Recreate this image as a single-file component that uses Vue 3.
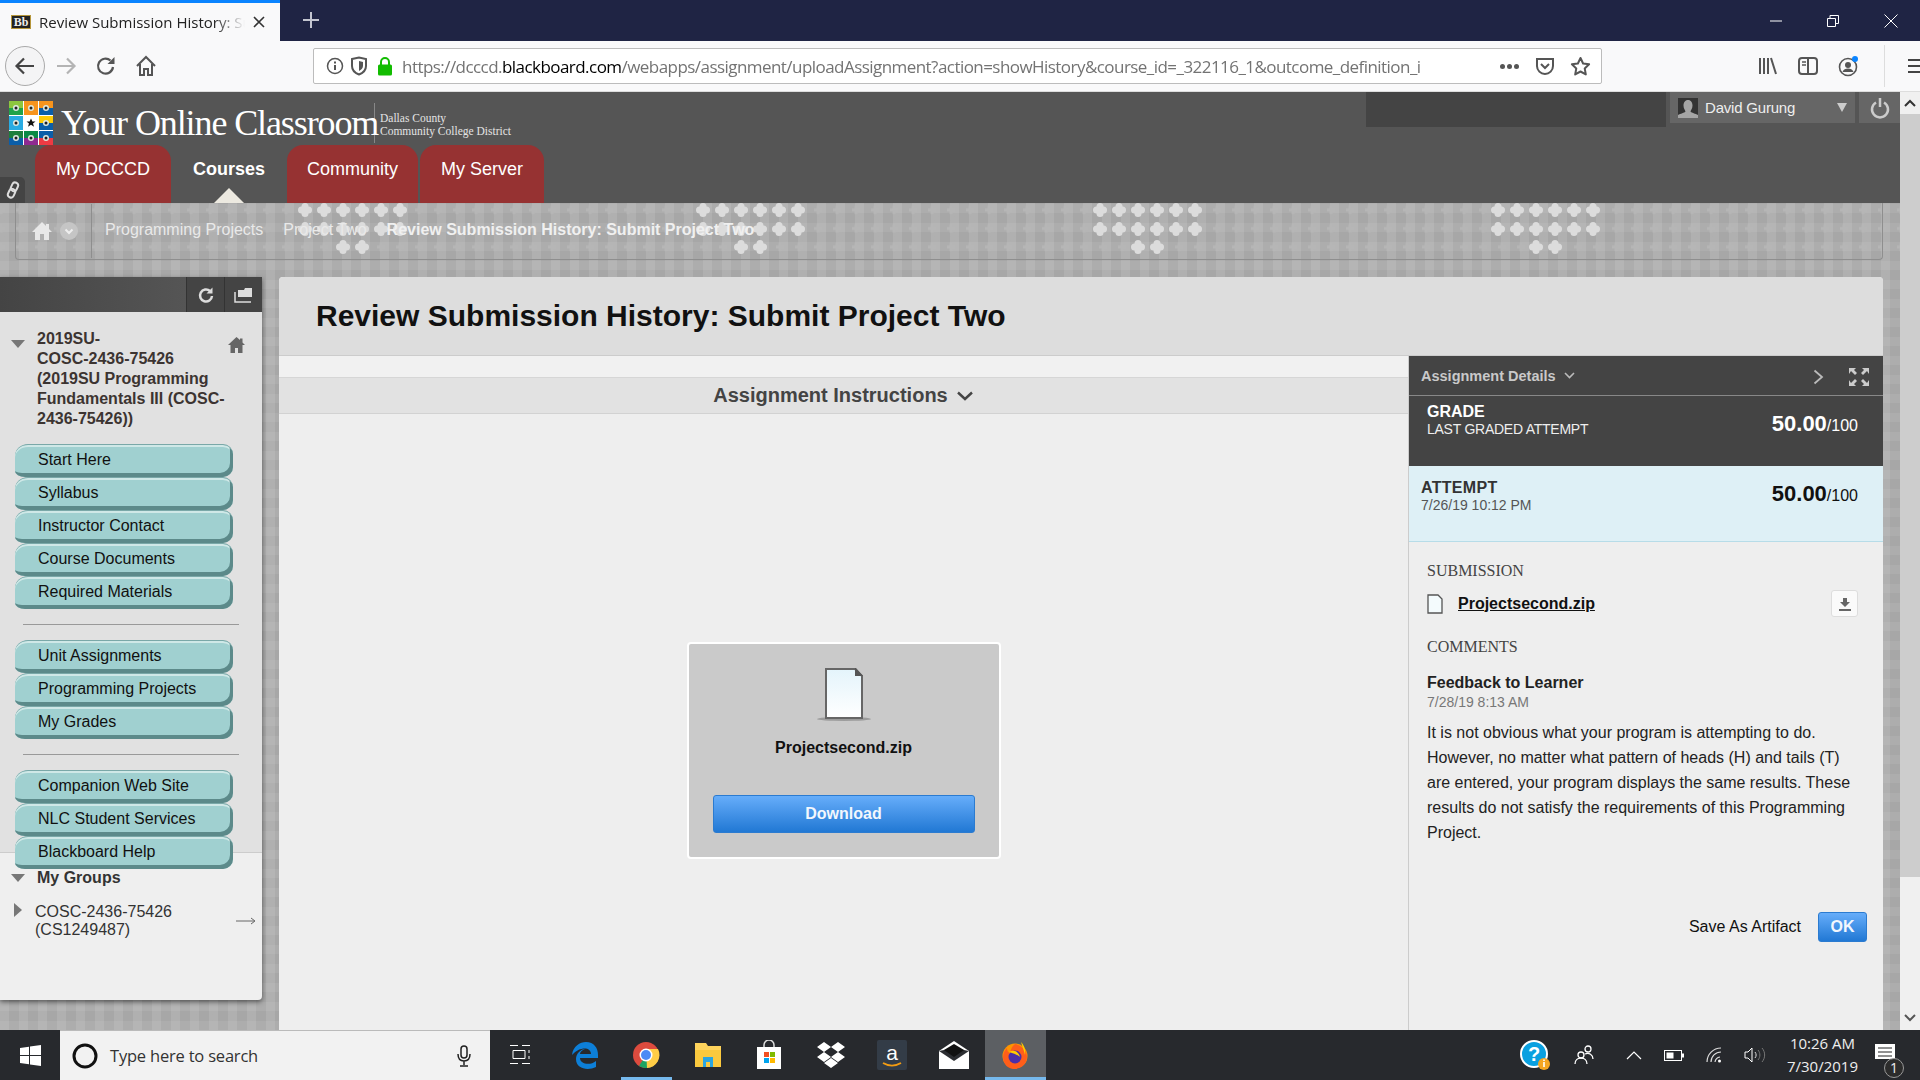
<script setup>
const navA = ['Start Here','Syllabus','Instructor Contact','Course Documents','Required Materials']
const navB = ['Unit Assignments','Programming Projects','My Grades']
const navC = ['Companion Web Site','NLC Student Services','Blackboard Help']
const clusterX = [305,703,1100,1498]
const bigDots = []
clusterX.forEach(x => {
  for (let i=0;i<6;i++){ bigDots.push([x+i*19,210]); bigDots.push([x+i*19,229]) }
  bigDots.push([x+38,247]); bigDots.push([x+57,247])
})
const logoCells = [
  ['#8cc63f','#1fa34a'],['#f7941d','#f7941d'],['#f7941d','#0b5ea8'],
  ['#29abe2','#29abe2'],['#fff','#fff'],['#ffcb05','#0b5ea8'],
  ['#1d7f3c','#0b5ea8'],['#0a8a45','#8e2a91'],['#0b5ea8','#ee3a43']
]
</script>

<template>
  <div class="app">
    <div class="tabstrip">
      <div class="tab">
        <span class="favicon">Bb</span>
        <span class="tab-title">Review Submission History: Submit Project Two</span>
        <svg class="tab-x" width="14" height="14" viewBox="0 0 14 14"><path d="M2 2l10 10M12 2L2 12" stroke="#333" stroke-width="1.6"/></svg>
      </div>
      <svg class="newtab" width="20" height="20" viewBox="0 0 20 20"><path d="M10 2v16M2 10h16" stroke="#c3c5d0" stroke-width="2"/></svg>
      <div class="winctl">
        <svg width="14" height="14" viewBox="0 0 14 14"><path d="M1 7h12" stroke="#fff"/></svg>
        <svg width="14" height="14" viewBox="0 0 14 14"><path d="M1.5 4.5h8v8h-8zM4 4.5V1.5h8.500v8h-3" fill="none" stroke="#fff"/></svg>
        <svg width="16" height="16" viewBox="0 0 16 16"><path d="M1.500 1.500l13 13M14.500 1.500l-13 13" stroke="#fff"/></svg>
      </div>
    </div>

    <div class="toolbar">
      <div class="backbtn">
        <svg width="24" height="24" viewBox="0 0 24 24"><path d="M21 12H4M11 4.500L3.500 12l7.500 7.500" fill="none" stroke="#444" stroke-width="2.200"/></svg>
      </div>
      <svg class="tb-fwd" width="24" height="24" viewBox="0 0 24 24"><path d="M3 12h17M13 4.500l7.500 7.500-7.500 7.500" fill="none" stroke="#b4b4b4" stroke-width="2.200"/></svg>
      <svg class="tb-reload" width="22" height="22" viewBox="0 0 22 22"><path d="M18 12a7.500 7.500 0 1 1-2.500-6.500" fill="none" stroke="#555" stroke-width="2.200"/><path d="M19.500 2v7h-7z" fill="#555"/></svg>
      <svg class="tb-home" width="22" height="22" viewBox="0 0 22 22"><path d="M2 11l9-9 9 9M5 9v11h4v-6h4v6h4V9" fill="none" stroke="#555" stroke-width="2"/></svg>
      <div class="urlbar">
        <svg class="u-i" width="18" height="18" viewBox="0 0 18 18"><circle cx="9" cy="9" r="7.500" fill="none" stroke="#555" stroke-width="1.500"/><path d="M9 8v5M9 4.500v2" stroke="#555" stroke-width="2"/></svg>
        <svg class="u-s" width="18" height="20" viewBox="0 0 18 20"><path d="M2 3l7-1.500L16 3v7c0 4-3 7-7 8.500C5 17 2 14 2 10z" fill="none" stroke="#555" stroke-width="2"/><path d="M9 5l4 1v4c0 2-2 4-4 5z" fill="#555"/></svg>
        <svg class="u-l" width="16" height="20" viewBox="0 0 16 20"><path d="M4 9V6a4 4 0 0 1 8 0v3" fill="none" stroke="#12bc00" stroke-width="2"/><rect x="1" y="8.500" width="14" height="11" rx="1.500" fill="#12bc00"/></svg>
        <div class="url"><span class="g">https://dcccd.</span>blackboard.com<span class="g">/webapps/assignment/uploadAssignment?action=showHistory&amp;course_id=_322116_1&amp;outcome_definition_i</span></div>
        <div class="u-right">
          <span class="dots"><i></i><i></i><i></i></span>
          <svg width="20" height="20" viewBox="0 0 20 20"><path d="M2 3h16v7a8 8 0 0 1-16 0z" fill="none" stroke="#555" stroke-width="2"/><path d="M6 8l4 4 4-4" fill="none" stroke="#555" stroke-width="2"/></svg>
          <svg width="21" height="21" viewBox="0 0 21 21"><path d="M10.500 2l2.600 5.500 6 .8-4.400 4.100 1.100 6-5.300-2.900-5.300 2.900 1.100-6L1.900 8.300l6-.8z" fill="none" stroke="#555" stroke-width="2" stroke-linejoin="round"/></svg>
        </div>
      </div>
      <div class="tb-right">
        <svg width="20" height="20" viewBox="0 0 20 20"><path d="M2 2v16M6 2v16M10 2v16M13 2l5 16" stroke="#555" stroke-width="2" fill="none"/></svg>
        <svg width="20" height="20" viewBox="0 0 20 20"><rect x="1" y="2" width="18" height="16" rx="3" fill="none" stroke="#555" stroke-width="2"/><path d="M10 2v16" stroke="#555" stroke-width="2"/><path d="M4 6h4M4 9h4" stroke="#555" stroke-width="1.500"/></svg>
        <svg width="22" height="22" viewBox="0 0 22 22"><circle cx="10" cy="12" r="8.500" fill="none" stroke="#555" stroke-width="1.600"/><circle cx="10" cy="10" r="3" fill="#555"/><path d="M4.500 17c1-3 3-3.500 5.500-3.500s4.500.5 5.500 3.500z" fill="#555"/><circle cx="17" cy="4" r="3" fill="#0a84ff"/></svg>
        <span class="tb-sep"></span>
        <svg width="18" height="16" viewBox="0 0 18 16"><path d="M1 2h16M1 8h16M1 14h16" stroke="#444" stroke-width="2.200"/></svg>
      </div>
    </div>

    <div class="viewport">
      <div class="page">
        <header class="hdr">
          <div class="hdr-top">
            <svg class="logo" width="44" height="44" viewBox="0 0 44 44">
              <rect width="44" height="44" fill="#fff"/>
              <g v-for="(c,i) in logoCells" :key="i" :transform="`translate(${(i%3)*15} ${Math.floor(i/3)*15})`">
                <rect width="14" height="7" :fill="c[0]"/>
                <rect y="7" width="14" height="7" :fill="c[1]"/>
                <circle v-if="i!==4" cx="7" cy="7" r="3" fill="#dfe8e0"/>
                <circle v-if="i!==4" cx="7" cy="7" r="1.500" fill="#222"/>
                <path v-else d="M7 2.500l1.400 3h3.100l-2.500 2 1 3.200L7 8.800 4 10.700l1-3.200-2.500-2h3.100z" fill="#111"/>
              </g>
            </svg>
            <div class="brand">Your Online Classroom</div>
            <div class="brand-sub">Dallas County<br>Community College District</div>
            <div class="hdr-right">
              <div class="hdr-dark"></div>
              <div class="user">
                <svg width="20" height="20" viewBox="0 0 20 20"><rect width="20" height="20" fill="#333"/><path d="M10 2c3 0 4.500 2.500 4.500 5.500S13 12 12.500 13.500c1 1.500 5 2 7.500 3.500v3H0v-3c2.500-1.500 6.500-2 7.500-3.500C7 12 5.500 10.500 5.500 7.500S7 2 10 2z" fill="#a5a5a5"/></svg>
                <span class="uname">David Gurung</span>
                <span class="utri"></span>
              </div>
              <div class="power">
                <svg width="20" height="22" viewBox="0 0 20 22"><path d="M6 5.500a8 8 0 1 0 8 0" fill="none" stroke="#ccc" stroke-width="2.500"/><path d="M10 1v9" stroke="#ccc" stroke-width="2.500"/></svg>
              </div>
            </div>
          </div>
          <nav class="hnav">
            <div class="stub">
              <svg width="14" height="18" viewBox="0 0 14 18"><g transform="rotate(25 7 9)" fill="none" stroke="#ddd" stroke-width="2"><rect x="4" y="1" width="6" height="9" rx="3"/><rect x="4" y="8" width="6" height="9" rx="3"/></g></svg>
            </div>
            <a class="ntab w136">My DCCCD</a>
            <a class="ntab cur">Courses<span class="caret"></span></a>
            <a class="ntab w131">Community</a>
            <a class="ntab w124">My Server</a>
          </nav>
        </header>

        <div class="below">
          <svg class="pat" width="1900" height="60" aria-hidden="true">
            <defs>
              <pattern id="plus" x="305" y="200.500" width="19" height="18.500" patternUnits="userSpaceOnUse">
                <path d="M9.500 5.500v8M5.500 9.500h8" stroke="#b6b6b6" stroke-width="3" transform="translate(-9.500 0)"/>
                <path d="M9.500 5.500v8M5.500 9.500h8" stroke="#b6b6b6" stroke-width="3" transform="translate(9.500 0)"/>
              </pattern>
            </defs>
            <g transform="translate(0 -203)">
              <rect x="0" y="203" width="1900" height="57" fill="url(#plus)"/>
              <g v-for="(d,i) in bigDots" :key="i" fill="#dcdcdc">
                <circle :cx="d[0]" :cy="d[1]-3.500" r="3.500"/><circle :cx="d[0]" :cy="d[1]+3.500" r="3.500"/>
                <circle :cx="d[0]-3.500" :cy="d[1]" r="3.500"/><circle :cx="d[0]+3.500" :cy="d[1]" r="3.500"/>
              </g>
            </g>
          </svg>

          <div class="crumbs">
            <div class="cr-home">
              <svg width="22" height="20" viewBox="0 0 22 20"><path d="M11 1L1 11h3v8h5v-6h4v6h5v-8h3l-3-3V3h-3v2z" fill="#e8e8e8"/></svg>
              <svg width="18" height="18" viewBox="0 0 18 18"><circle cx="9" cy="9" r="9" fill="#c5c5c5"/><path d="M5.500 7.500L9 11l3.500-3.500" fill="none" stroke="#eee" stroke-width="2"/></svg>
            </div>
            <span class="cr">Programming Projects</span>
            <span class="cr">Project Two</span>
            <span class="cr b">Review Submission History: Submit Project Two</span>
          </div>

          <div class="body">
            <aside class="side">
              <div class="side-top">
                <div class="st-btn">
                  <svg width="18" height="18" viewBox="0 0 18 18"><path d="M15 10a6 6 0 1 1-2-5" fill="none" stroke="#ddd" stroke-width="2.500"/><path d="M15.500 1.500v6h-6z" fill="#ddd"/></svg>
                </div>
                <div class="st-btn">
                  <svg width="20" height="16" viewBox="0 0 20 16"><path d="M4 3h6l1-2h7v9H4z" fill="#ddd"/><path d="M1 5v10h16" fill="none" stroke="#ddd" stroke-width="1.500"/></svg>
                </div>
              </div>
              <div class="side-main">
                <div class="course">
                  <span class="tri-d"></span>
                  <div class="course-name">2019SU-<br>COSC-2436-75426<br>(2019SU Programming<br>Fundamentals III (COSC-<br>2436-75426))</div>
                  <svg class="c-home" width="19" height="18" viewBox="0 0 19 18"><path d="M9.500 1L1 9h2.500v8h4.500v-5h3v5h4.500V9H18l-2.500-2.500V2.500h-2.500v1.500z" fill="#666"/></svg>
                </div>
                <a v-for="n in navA" :key="n" class="nb">{{ n }}</a>
                <div class="sep"></div>
                <a v-for="n in navB" :key="n" class="nb">{{ n }}</a>
                <div class="sep"></div>
                <a v-for="n in navC" :key="n" class="nb">{{ n }}</a>
              </div>
              <div class="groups">
                <div class="g-h"><span class="tri-d"></span><b>My Groups</b></div>
                <div class="g-i">
                  <span class="tri-r"></span>
                  <span class="g-name">COSC-2436-75426<br>(CS1249487)</span>
                  <svg width="20" height="8" viewBox="0 0 20 8"><path d="M0 4h18M15 1l4 3-4 3" fill="none" stroke="#666"/></svg>
                </div>
              </div>
            </aside>

            <main class="main">
              <div class="m-title"><h1>Review Submission History: Submit Project Two</h1></div>
              <div class="m-row">
                <section class="m-left">
                  <div class="m-gap"></div>
                  <div class="instr">Assignment Instructions
                    <svg width="18" height="10" viewBox="0 0 18 10"><path d="M2 1.500l7 6.500 7-6.500" fill="none" stroke="#444" stroke-width="2.400"/></svg>
                  </div>
                  <div class="card">
                    <svg class="doc" width="56" height="56" viewBox="0 0 56 56">
                      <defs><linearGradient id="docg" x1="0" y1="0" x2="0" y2="1"><stop offset="0" stop-color="#e4f4fb"/><stop offset="1" stop-color="#fff"/></linearGradient></defs>
                      <ellipse cx="28" cy="52" rx="27" ry="2" fill="#9c9c9c"/>
                      <path d="M10 2h29l7 7v42H10z" fill="url(#docg)" stroke="#666" stroke-width="2"/>
                      <path d="M39 1h1l7 8h-8z" fill="#555"/>
                    </svg>
                    <div class="card-name">Projectsecond.zip</div>
                    <button class="btn dl">Download</button>
                  </div>
                </section>
                <section class="panel">
                  <div class="p-head">
                    <span class="p-t">Assignment Details</span>
                    <svg class="p-c" width="11" height="7" viewBox="0 0 11 7"><path d="M1 1l4.500 4.500L10 1" fill="none" stroke="#bbb" stroke-width="1.600"/></svg>
                    <svg class="p-r" width="11" height="16" viewBox="0 0 11 16"><path d="M1.500 1.500L9 8l-7.500 6.500" fill="none" stroke="#bbb" stroke-width="1.800"/></svg>
                    <svg width="20" height="18" viewBox="0 0 20 18"><g fill="#ccc"><path d="M0 0h7L5 2 8 5 6 7 2 3 0 6zM20 0h-7l2 2-3 3 2 2 4-4 2 3zM0 18h7l-2-2 3-3-2-2-4 4-2-3zM20 18h-7l2-2-3-3 2-2 4 4 2-3z"/></g></svg>
                  </div>
                  <div class="p-grade">
                    <div class="p-gl"><b>GRADE</b><span>LAST GRADED ATTEMPT</span></div>
                    <div class="score"><b>50.00</b>/100</div>
                  </div>
                  <div class="p-att">
                    <div class="p-al"><b>ATTEMPT</b><span>7/26/19 10:12 PM</span></div>
                    <div class="score"><b>50.00</b>/100</div>
                  </div>
                  <div class="p-body">
                    <h4>SUBMISSION</h4>
                    <div class="sub-row">
                      <svg width="16" height="20" viewBox="0 0 16 20"><path d="M1 1h10l4 4v14H1z" fill="#f4fbfd" stroke="#555" stroke-width="1.300"/></svg>
                      <a class="sub-link">Projectsecond.zip</a>
                      <span class="dl-ic"><svg width="14" height="14" viewBox="0 0 14 14"><path d="M5 1h4v4h3L7 10 2 5h3zM1 12h12v2H1z" fill="#666"/></svg></span>
                    </div>
                    <h4 class="h-com">COMMENTS</h4>
                    <div class="fb">Feedback to Learner</div>
                    <div class="fb-d">7/28/19 8:13 AM</div>
                    <p class="fb-t">It is not obvious what your program is attempting to do. However, no matter what pattern of heads (H) and tails (T) are entered, your program displays the same results. These results do not satisfy the requirements of this Programming Project.</p>
                    <div class="foot"><span>Save As Artifact</span><button class="btn ok">OK</button></div>
                  </div>
                </section>
              </div>
            </main>
          </div>
        </div>
      </div>
      <div class="sbar">
        <svg width="12" height="8" viewBox="0 0 12 8"><path d="M1 7l5-5 5 5" fill="none" stroke="#333" stroke-width="2"/></svg>
        <div class="thumb"></div>
        <svg class="sb-d" width="12" height="8" viewBox="0 0 12 8"><path d="M1 1l5 5 5-5" fill="none" stroke="#555" stroke-width="2"/></svg>
      </div>
    </div>

    <footer class="taskbar">
      <div class="start"><svg width="21" height="21" viewBox="0 0 21 21"><path d="M0 3l9-1.300V10H0zM10 1.500L21 0v10H10zM0 11h9v8.300L0 18zM10 11h11v10l-11-1.500z" fill="#fff"/></svg></div>
      <div class="search">
        <svg width="28" height="28" viewBox="0 0 28 28"><circle cx="14" cy="14" r="11" fill="none" stroke="#111" stroke-width="3"/></svg>
        <span class="s-txt">Type here to search</span>
        <svg class="mic" width="14" height="22" viewBox="0 0 14 22"><rect x="4" y="1" width="6" height="12" rx="3" fill="none" stroke="#222" stroke-width="1.500"/><path d="M1 9c0 4 2 7 6 7s6-3 6-7M7 16v4M3 21h8" fill="none" stroke="#222" stroke-width="1.500"/></svg>
      </div>
      <div class="apps">
        <div class="ap w60"><svg width="21" height="20" viewBox="0 0 21 20"><path d="M0 .500h8M12 .500h8M3 5.500h12v8H3zM0 18.500h8M12 18.500h8M19 5v3M19 11v3" fill="none" stroke="#fff"/></svg></div>
        <div class="ap"><svg width="28" height="28" viewBox="0 0 28 28"><path d="M1 14C2 5 9 1 15 1c8 0 12 6 12 13v3H9c0 6 10 8 16 3v6c-8 4-20 2-20-8 0-3 1-5 3-7 2-2 4-3 6-3-3 1-5 3-5 5h11c0-7-11-8-19 1z" fill="#0d7fd8"/></svg></div>
        <div class="ap u"><svg width="28" height="28" viewBox="0 0 28 28"><circle cx="14" cy="14" r="13" fill="#dd4b3e"/><path d="M14 14L26.500 17A13 13 0 0 1 7 25z" fill="#1da462"/><path d="M14 8h12a13 13 0 0 1-11 19z" fill="#ffcd46"/><circle cx="14" cy="14" r="6.500" fill="#fff"/><circle cx="14" cy="14" r="5" fill="#4c8bf5"/></svg></div>
        <div class="ap"><svg width="28" height="26" viewBox="0 0 28 26"><path d="M1 1h11l2 3h13v21H1z" fill="#ffd45c"/><path d="M1 8h26v17H1z" fill="#fbc93e"/><path d="M9 25V15h10v10h-3v-5h-4v5z" fill="#2ba5e0"/></svg></div>
        <div class="ap"><svg width="26" height="30" viewBox="0 0 26 30"><path d="M8 8V5a5 5 0 0 1 10 0v3" fill="none" stroke="#ddd" stroke-width="1.500"/><rect x="1" y="7" width="24" height="22" fill="#fff"/><rect x="8" y="12" width="5" height="5" fill="#f25022"/><rect x="14" y="12" width="5" height="5" fill="#7fba00"/><rect x="8" y="18" width="5" height="5" fill="#00a4ef"/><rect x="14" y="18" width="5" height="5" fill="#ffb900"/></svg></div>
        <div class="ap"><svg width="30" height="28" viewBox="0 0 30 28"><path d="M8 1l7 5-7 5-7-5zM22 1l7 5-7 5-7-5zM8 11l7 5-7 5-7-5zM22 11l7 5-7 5-7-5zM15 17l7 5-7 5-7-5z" fill="#fff"/></svg></div>
        <div class="ap"><svg width="30" height="30" viewBox="0 0 30 30"><rect width="30" height="30" rx="2" fill="#333c47"/><text x="15" y="20" text-anchor="middle" font-family="Liberation Sans" font-size="21" fill="#fff">a</text><path d="M6 23c6 3.500 12 3.500 18 0" fill="none" stroke="#f39c12" stroke-width="1.800"/></svg></div>
        <div class="ap"><svg width="30" height="28" viewBox="0 0 30 28"><path d="M0 10L15 0l15 10v18H0z" fill="#fff"/><path d="M0 10l15 10 15-10-15-3z" fill="#2b2d31"/><path d="M5 9L15 3l10 6-10 7z" fill="#111"/></svg></div>
        <div class="ap ff"><svg width="28" height="30" viewBox="0 0 28 30"><circle cx="14" cy="16" r="12.500" fill="#ff9500"/><path d="M14 4c6 1 12 6 12 13s-6 12-13 12C7 29 2 24 2 17 2 13 4 10 6 8c0 3 1 4 3 5 1-4 2-7 5-9z" fill="#ff5e1a"/><circle cx="14" cy="17" r="6.500" fill="#4a2fa8"/><path d="M8 12c5-3 10 0 11 5-2-2-5-3-11-5zM20 2c3 3 5 8 4 13-1-5-3-9-4-13z" fill="#ffcb00"/></svg></div>
      </div>
      <div class="tray">
        <svg class="t-help" width="40" height="40" viewBox="0 0 40 40"><circle cx="18" cy="19" r="13" fill="#0aa0e0" stroke="#fff" stroke-width="2"/><text x="18" y="26" text-anchor="middle" font-family="Liberation Sans" font-weight="700" font-size="20" fill="#fff">?</text><circle cx="28" cy="29" r="6" fill="#f5a623"/><path d="M28 27v5M28 24.500v1.500" stroke="#fff" stroke-width="1.600"/></svg>
        <svg class="t-ppl" width="20" height="20" viewBox="0 0 20 20"><circle cx="7" cy="10" r="3" fill="none" stroke="#fff" stroke-width="1.300"/><circle cx="14" cy="4" r="3" fill="none" stroke="#fff" stroke-width="1.300"/><path d="M1 19c0-4 3-6 6-6s6 2 6 6M11 9c4-2 8 1 8 5" fill="none" stroke="#fff" stroke-width="1.300"/></svg>
        <svg class="t-chev" width="16" height="9" viewBox="0 0 16 9"><path d="M1 8l7-7 7 7" fill="none" stroke="#fff" stroke-width="1.200"/></svg>
        <svg class="t-bat" width="20" height="11" viewBox="0 0 20 11"><rect x=".5" y=".5" width="17" height="10" fill="none" stroke="#fff"/><rect x="2.500" y="2.500" width="7" height="6" fill="#fff"/><rect x="18" y="3.500" width="2" height="4" fill="#fff"/></svg>
        <svg class="t-wifi" width="16" height="16" viewBox="0 0 16 16"><path d="M1 15A14 14 0 0 1 15 1M5 15A10 10 0 0 1 15 5M9 15a6 6 0 0 1 5-5" fill="none" stroke="#ddd" stroke-width="1.200"/><circle cx="13.500" cy="14" r="1.500" fill="#fff"/></svg>
        <svg class="t-vol" width="22" height="16" viewBox="0 0 22 16"><path d="M1 5h3l4-4v14l-4-4H1z" fill="none" stroke="#fff"/><path d="M11 5c1.500 2 1.500 4 0 6" fill="none" stroke="#ddd"/><path d="M14 3c2.500 3 2.500 7 0 10M18 1c3.500 4 3.500 10 0 14" fill="none" stroke="#777"/></svg>
        <div class="clock"><span>10:26 AM</span><span>7/30/2019</span></div>
        <div class="notif">
          <svg width="20" height="17" viewBox="0 0 20 17"><path d="M0 0h20v15H0z" fill="#fff"/><path d="M3 4h14M3 8h14M3 12h14" stroke="#222"/></svg>
          <span class="badge">1</span>
        </div>
      </div>
    </footer>
  </div>
</template>

<style>
html, body { margin: 0; background: #eee; overflow: hidden; }
</style>

<style scoped>
.app { width: 1920px; height: 1080px; display: flex; flex-direction: column; overflow: hidden; font-family: "Liberation Sans", Arial, sans-serif; color: #111; }

.tabstrip { height: 41px; flex: none; display: flex; align-items: stretch; background: #1f2444; }
.tab { width: 280px; box-sizing: border-box; background: #f9f9fa; border-top: 3px solid #0a84ff; display: flex; align-items: center; padding: 0 14px 0 11px; }
.favicon { flex: none; width: 20px; height: 14px; background: #222; border: 1px solid #b6963a; box-sizing: border-box; color: #eee; font: 700 12px/12px "Liberation Serif", serif; text-align: center; }
.tab-title { margin-left: 8px; flex: none; width: 206px; overflow: hidden; white-space: nowrap; font: 15px "Open Sans", sans-serif; color: #222; -webkit-mask-image: linear-gradient(90deg, #000 85%, transparent); mask-image: linear-gradient(90deg, #000 85%, transparent); }
.tab-x { margin-left: 7px; flex: none; }
.newtab { margin: 10px 0 0 21px; }
.winctl { margin-left: auto; display: flex; align-items: center; gap: 43px; padding-right: 21px; padding-left: 0; }

.toolbar { height: 51px; flex: none; box-sizing: border-box; background: #f9f9fa; border-bottom: 1px solid #ddd; display: flex; align-items: center; position: relative; }
.backbtn { width: 40px; height: 40px; margin-left: 5px; border: 1px solid #aaa; border-radius: 50%; background: #f4f4f5; display: flex; align-items: center; justify-content: center; box-sizing: border-box; flex: none; }
.tb-fwd { margin-left: 9px; flex: none; }
.tb-reload { margin-left: 17px; flex: none; }
.tb-home { margin-left: 18px; flex: none; }
.urlbar { margin-left: 156px; width: 1289px; height: 36px; margin-left: 156px; box-sizing: border-box; background: #fff; border: 1px solid #bcbcbc; border-radius: 2px; display: flex; align-items: center; flex: none; }
.u-i { margin-left: 12px; flex: none; }
.u-s { margin-left: 6px; flex: none; }
.u-l { margin-left: 9px; flex: none; }
.url { margin-left: 9px; width: 1052px; flex: none; overflow: hidden; white-space: nowrap; font: 17px "Open Sans", sans-serif; letter-spacing: -0.55px; color: #000; -webkit-mask-image: linear-gradient(90deg, #000 98%, transparent); mask-image: linear-gradient(90deg, #000 98%, transparent); }
.url .g { color: #737373; }
.u-right { margin-left: 46px; display: flex; align-items: center; gap: 15px; }
.dots { display: flex; gap: 2px; width: 20px; }
.dots i { width: 5px; height: 5px; background: #555; border-radius: 50%; }
.tb-right { margin-left: 156px; display: flex; align-items: center; gap: 20px; }
.tb-sep { width: 1px; height: 42px; background: #ddd; margin: 0 2px 0 4px; }

.viewport { flex: 1; display: flex; min-height: 0; }
.page { width: 1900px; flex: none; display: flex; flex-direction: column; }
.sbar { width: 20px; flex: none; background: #f0f0f0; display: flex; flex-direction: column; align-items: center; padding-top: 7px; box-sizing: border-box; }
.thumb { width: 20px; height: 763px; background: #cdcdcd; margin-top: 7px; }
.sb-d { margin-top: auto; margin-bottom: 8px; }

.hdr { height: 111px; flex: none; background: #555; display: flex; flex-direction: column; }
.hdr-top { height: 53px; flex: none; display: flex; align-items: flex-start; }
.logo { margin: 9px 0 0 9px; flex: none; }
.brand { margin: 11px 0 0 8px; font: 36px/40px "Liberation Serif", serif; letter-spacing: -1.100px; color: #fff; white-space: nowrap; width: 313px; border-right: 1px solid #888; }
.brand-sub { margin: 20px 0 0 5px; font: 11.500px/13px "Liberation Serif", serif; color: #e4e4e4; white-space: nowrap; }
.hdr-right { margin-left: auto; display: flex; align-items: flex-start; }
.hdr-dark { width: 300px; height: 35px; background: #444; margin-right: 4px; }
.user { width: 185px; height: 31px; background: #666; display: flex; align-items: center; padding-left: 8px; box-sizing: border-box; margin-right: 4px; }
.uname { margin-left: 7px; font-size: 15px; letter-spacing: -0.200px; color: #eee; }
.utri { margin-left: auto; margin-right: 8px; width: 0; height: 0; border: 5.500px solid transparent; border-top: 9px solid #ccc; border-bottom: 0; }
.power { width: 41px; height: 31px; background: #666; display: flex; align-items: center; justify-content: center; }

.hnav { flex: 1; display: flex; padding-left: 35px; position: relative; }
.stub { position: absolute; left: 0; bottom: 0; width: 25px; height: 26px; background: #444; border-radius: 0 5px 0 0; display: flex; align-items: center; justify-content: center; }
.ntab { position: relative; display: block; box-sizing: border-box; text-align: center; padding-top: 14px; font-size: 18px; line-height: 20px; color: #fff; background: #963232; border-radius: 16px 16px 0 0; }
.w136 { width: 136px; }
.w131 { width: 131px; margin-right: 2px; }
.w124 { width: 124px; }
.ntab.cur { width: 116px; background: none; font-weight: 700; }
.caret { position: absolute; left: 43px; bottom: 0; width: 0; height: 0; border: 15px solid transparent; border-top: 0; border-bottom: 15px solid #ece9e0; }

.below { flex: 1; min-height: 0; position: relative; display: flex; flex-direction: column; background-color: #a7a7a7; background-image: repeating-linear-gradient(90deg, rgba(255,255,255,.1) 0 9px, transparent 9px 19px), repeating-linear-gradient(0deg, rgba(255,255,255,.07) 0 9px, transparent 9px 19px); }
.pat { position: absolute; left: 0; top: 0; }
.crumbs { position: relative; height: 57px; flex: none; margin: 0 17px 0 15px; box-sizing: border-box; border: 1px solid #8e8e8e; border-top: 0; border-radius: 0 0 4px 4px; display: flex; align-items: center; gap: 20px; color: #e9e9e9; font-size: 16px; padding-bottom: 2px; }
.cr-home { width: 76px; height: 100%; box-sizing: border-box; border-right: 1px solid #8e8e8e; display: flex; align-items: center; gap: 7px; padding: 0 0 0 15px; margin-right: -7px; margin-top: 2px; flex: none; }
.cr { white-space: nowrap; }
.cr.b { font-weight: 700; color: #f0f0f0; }

.body { flex: 1; min-height: 0; display: flex; align-items: flex-start; padding-top: 17px; gap: 17px; position: relative; }
.side { width: 262px; height: 723px; flex: none; background: #efefef; border-radius: 0 0 4px 0; box-shadow: 0 2px 5px rgba(0,0,0,.5); display: flex; flex-direction: column; }
.side-top { height: 35px; flex: none; background: linear-gradient(90deg, #444, #5c5c5c); display: flex; justify-content: flex-end; }
.st-btn { width: 37px; background: #444; border-left: 1px solid #333; display: flex; align-items: center; justify-content: center; }
.side-main { height: 541px; flex: none; box-sizing: border-box; background: #e1e1e1; padding: 22px 0 0 15px; border-bottom: 1px solid #ccc; }
.course { display: flex; margin-left: -4px; height: 110px; color: #3c3431; font-weight: 700; font-size: 16px; line-height: 20px; position: relative; }
.tri-d { width: 0; height: 0; border: 7.500px solid transparent; border-top: 8px solid #777; border-bottom: 0; margin-top: 6px; flex: none; }
.course-name { margin-left: 12px; white-space: nowrap; position: relative; top: -5px; }
.c-home { position: absolute; right: 16px; top: 2px; }
.nb { display: block; width: 218px; height: 33px; box-sizing: border-box; padding: 5px 0 0 23px; font-size: 16px; line-height: 19px; color: #111; background: #a0d0d0; border-radius: 13px 10px 10px 10px / 12px 10px 10px 6px; border-top: 1px solid #7aa8a8; box-shadow: inset -3px -4px 0 #5c8a8a, inset 0 2px 0 #cfe8e7; }
.sep { width: 216px; height: 1px; background: #999; margin: 15px 0 15px 8px; }
.groups { flex: 1; padding: 15px 0 0 11px; color: #333; }
.g-h { display: flex; align-items: center; height: 20px; font-size: 16px; }
.g-h .tri-d { margin-top: 0; }
.g-h b { margin-left: 12px; }
.g-i { display: flex; margin-top: 15px; position: relative; }
.tri-r { width: 0; height: 0; border: 7.500px solid transparent; border-left: 8px solid #777; border-right: 0; margin: 0 0 0 3px; flex: none; }
.g-name { margin-left: 13px; font-size: 16px; line-height: 18px; }
.g-i svg { position: absolute; right: 6px; top: 14px; }

.main { width: 1604px; height: 753px; flex: none; background: #eee; border-radius: 4px 4px 0 0; display: flex; flex-direction: column; }
.m-title { height: 79px; flex: none; box-sizing: border-box; background: #ddd; border-bottom: 1px solid #ccc; border-radius: 4px 4px 0 0; padding: 19px 0 0 37px; }
h1 { margin: 0; font-size: 30px; line-height: 40px; font-weight: 700; color: #111; white-space: nowrap; }
.m-row { flex: 1; display: flex; min-height: 0; }
.m-left { width: 1129px; flex: none; display: flex; flex-direction: column; align-items: center; }
.m-gap { height: 21px; width: 100%; flex: none; background: #f1f1f1; }
.instr { width: 100%; height: 37px; flex: none; box-sizing: border-box; background: #e2e2e2; border-top: 1px solid #d6d6d6; border-bottom: 1px solid #d2d2d2; display: flex; align-items: center; justify-content: center; gap: 8px; font-size: 20px; font-weight: 700; color: #444; }
.card { margin-top: 228px; width: 314px; height: 217px; box-sizing: border-box; background: #cacaca; border: 2px solid #fff; border-radius: 4px; display: flex; flex-direction: column; align-items: center; padding: 23px 24px 0; }
.doc { flex: none; }
.card-name { margin-top: 15px; font-size: 16px; line-height: 20px; font-weight: 700; color: #111; }
.btn { font-family: inherit; border: 1px solid #2b7bd0; border-radius: 3px; color: #f2f7fd; font-weight: 700; background: linear-gradient(#66adfa, #2178d4); padding: 0; }
.dl { margin-top: 37px; width: 100%; height: 38px; font-size: 16px; }

.panel { flex: 1; min-width: 0; border-left: 1px solid #ccc; display: flex; flex-direction: column; }
.p-head { height: 40px; flex: none; box-sizing: border-box; background: #444; border-bottom: 1px solid #888; display: flex; align-items: center; padding: 0 14px 0 12px; color: #c9c9c9; font-size: 14.500px; font-weight: 700; }
.p-c { margin-left: 8px; }
.p-r { margin: 3px 25px 0 auto; }
.p-head svg:last-child { margin-top: 3px; }
.p-grade { height: 70px; flex: none; background: #444; color: #fff; display: flex; justify-content: space-between; padding: 6px 25px 0 18px; box-sizing: border-box; }
.p-gl b { display: block; font-size: 16px; line-height: 19px; }
.p-gl span { display: block; font-size: 14px; line-height: 16px; letter-spacing: -0.250px; color: #eee; }
.score { font-size: 16px; line-height: 26px; margin-top: 9px; white-space: nowrap; }
.score b { font-size: 22px; }
.p-att { height: 76px; flex: none; box-sizing: border-box; background: #def0f6; border-bottom: 1px solid #b7dce8; display: flex; justify-content: space-between; padding: 13px 25px 0 12px; color: #333; }
.p-att .score { color: #111; margin-top: 2px; }
.p-al b { display: block; font-size: 16px; line-height: 18px; letter-spacing: .3px; color: #333; }
.p-al span { display: block; font-size: 14px; line-height: 16px; color: #555; }
.p-body { flex: 1; position: relative; padding: 20px 25px 0 18px; min-height: 0; }
h4 { margin: 0; font: 400 16px/18px "Liberation Serif", serif; color: #444; }
.sub-row { display: flex; align-items: center; margin-top: 10px; height: 27px; }
.sub-link { margin-left: 15px; font-size: 16px; font-weight: 700; text-decoration: underline; color: #111; }
.dl-ic { margin-left: auto; width: 27px; height: 27px; box-sizing: border-box; background: #fafafa; border: 1px solid #ddd; border-radius: 3px; display: flex; align-items: center; justify-content: center; }
.h-com { margin-top: 21px; }
.fb { margin-top: 17px; font-size: 16px; font-weight: 700; line-height: 20px; color: #222; }
.fb-d { font-size: 14px; line-height: 18px; color: #777; margin-top: 0; }
.fb-t { margin: 9px 0 0; font-size: 16px; line-height: 25px; color: #222; width: 440px; }
.foot { position: absolute; right: 16px; top: 370px; display: flex; align-items: center; gap: 17px; font-size: 16px; }
.ok { width: 49px; height: 30px; font-size: 16px; }

.taskbar { height: 50px; flex: none; background: #27292d; display: flex; align-items: stretch; color: #fff; }
.start { width: 60px; flex: none; display: flex; align-items: center; justify-content: center; }
.search { width: 430px; flex: none; box-sizing: border-box; background: #f2f2f2; border-top: 1px solid #bbb; display: flex; align-items: center; padding-left: 11px; }
.s-txt { margin-left: 11px; font: 16.500px "Open Sans", sans-serif; color: #333; letter-spacing: -0.200px; }
.mic { margin-left: auto; margin-right: 19px; }
.apps { display: flex; }
.ap { width: 61.500px; flex: none; display: flex; align-items: center; justify-content: center; box-sizing: border-box; position: relative; }
.w60 { width: 60px; margin-right: 4px; }
.ap.u::after, .ap.ff::after { content: ""; position: absolute; left: 5px; right: 5px; bottom: 0; height: 3px; background: #76b9ed; }
.ap.ff { background: #5c5f63; }
.ap.ff::after { left: 0; right: 0; }
.tray { margin-left: auto; display: flex; align-items: center; position: relative; }
.t-help { margin-right: 18px; }
.t-ppl { margin-right: 32px; }
.t-chev { margin-right: 22px; }
.t-bat { margin-right: 22px; }
.t-wifi { margin-right: 22px; }
.t-vol { margin-right: 21px; }
.clock { display: flex; flex-direction: column; align-items: center; font: 15px/23px "Open Sans", sans-serif; color: #eee; margin-right: 21px; white-space: nowrap; }
.notif { width: 30px; position: relative; height: 40px; margin-right: 11px; padding-top: 9px; box-sizing: border-box; border-right: 0; }
.notif svg { display: block; margin-left: -4px; }
.badge { position: absolute; left: 5px; top: 23px; width: 20px; height: 20px; border-radius: 50%; background: #2c2c2c; border: 1px solid #999; box-sizing: border-box; font: 14px/18px "Open Sans", sans-serif; text-align: center; color: #eee; }
</style>
